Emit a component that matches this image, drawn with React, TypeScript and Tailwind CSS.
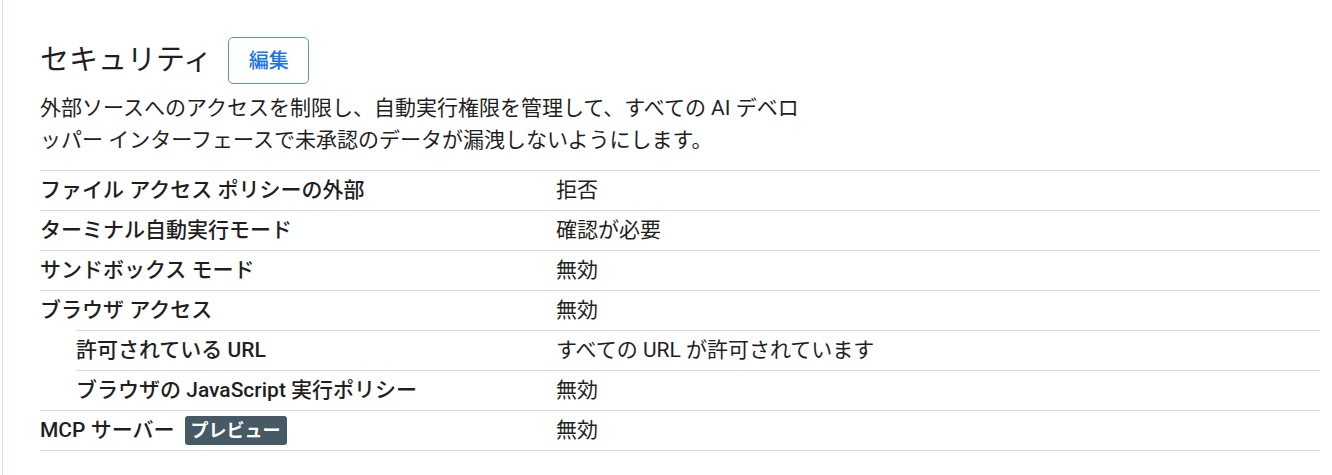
const rows: { label: string; value: string; indent?: boolean; badge?: string }[] = [
  { label: 'ファイル アクセス ポリシーの外部', value: '拒否' },
  { label: 'ターミナル自動実行モード', value: '確認が必要' },
  { label: 'サンドボックス モード', value: '無効' },
  { label: 'ブラウザ アクセス', value: '無効' },
  { label: '許可されている URL', value: 'すべての URL が許可されています', indent: true },
  { label: 'ブラウザの JavaScript 実行ポリシー', value: '無効', indent: true },
  { label: 'MCP サーバー', value: '無効', badge: 'プレビュー' },
];

export default function App() {
  return (
    <div
      className="min-h-[475px] bg-white text-[#1f1f1f]"
      style={{ fontFamily: 'Roboto, "Noto Sans CJK JP", sans-serif' }}
    >
      <div className="ml-[2px] min-h-[475px] border-l border-[#d3e3fd] pl-[37px] pr-[12px] pt-[37px]">
        <div className="flex items-center gap-4">
          <h1 className="text-[29px] font-normal leading-none">セキュリティ</h1>
          <button
            type="button"
            className="h-[47px] w-[81px] rounded-[5px] border border-[#5b8fd9] text-[20px] font-medium text-[#1a73e8]"
          >
            編集
          </button>
        </div>
        <p className="mt-2 w-[766px] text-[21px] leading-[32px]">
          外部ソースへのアクセスを制限し、自動実行権限を管理して、すべての AI デベロッパー インターフェースで未承認のデータが漏洩しないようにします。
        </p>
        <div className="mt-[14px] border-b border-[#dadce0]">
          {rows.map((r) => (
            <div
              key={r.label}
              className={
                r.indent
                  ? 'ml-[36px] flex h-10 items-center border-t border-[#dadce0]'
                  : 'flex h-10 items-center border-t border-[#dadce0]'
              }
            >
              <div
                className={
                  r.indent
                    ? 'flex w-[480px] shrink-0 items-center text-[21px] font-medium'
                    : 'flex w-[516px] shrink-0 items-center text-[21px] font-medium'
                }
              >
                <span>{r.label}</span>
                {r.badge && (
                  <span className="ml-[10px] rounded-[3px] bg-[#455a64] px-[6px] py-[2px] text-[18px] font-bold leading-[25px] text-white">
                    {r.badge}
                  </span>
                )}
              </div>
              <div className="text-[21px]">{r.value}</div>
            </div>
          ))}
        </div>
      </div>
    </div>
  );
}
